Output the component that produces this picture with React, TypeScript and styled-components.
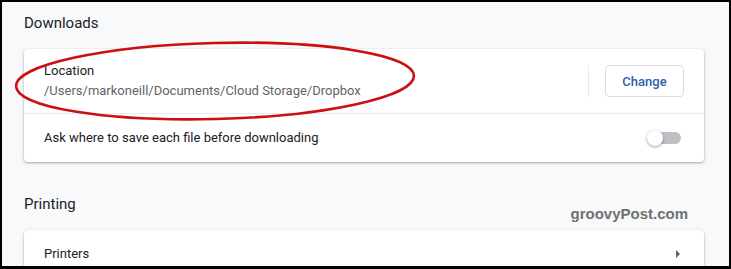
import React from "react";
import styled, { createGlobalStyle } from "styled-components";

const GlobalStyle = createGlobalStyle`
  html, body {
    margin: 0;
    padding: 0;
    background: #000;
  }
  body {
    font-family: Roboto, "Liberation Sans", Arial, sans-serif;
    -webkit-font-smoothing: antialiased;
  }
`;

const Frame = styled.div`
  position: relative;
  box-sizing: border-box;
  width: 731px;
  height: 269px;
  border: 2px solid #000;
  border-bottom-width: 3px;
  background: #f8f9fa;
  overflow: hidden;
  padding: 11px 25px 0 22px;
`;

const SectionHead = styled.div<{ top?: number }>`
  display: flex;
  align-items: flex-end;
  justify-content: space-between;
  margin-top: ${p => p.top ?? 0}px;
  margin-bottom: 16px;
`;

const Heading = styled.h2`
  margin: 0;
  font-size: 15px;
  line-height: 20px;
  font-weight: 400;
  color: #202124;
`;

const Watermark = styled.span`
  font-family: "Liberation Sans", Arial, sans-serif;
  font-size: 15px;
  font-weight: 700;
  color: #707070;
  padding-right: 16px;
  margin-bottom: -8px;
`;

const Card = styled.div`
  background: #fff;
  border-radius: 4px;
  box-shadow: 0 1px 2px rgba(60, 64, 67, 0.3), 0 1px 3px 1px rgba(60, 64, 67, 0.12);
`;

const Row = styled.div<{ height: number; divider?: boolean }>`
  display: flex;
  align-items: center;
  box-sizing: border-box;
  height: ${p => p.height}px;
  padding: 0 20px;
  border-top: ${p => (p.divider ? "1px solid #e8eaed" : "none")};
`;

const RowText = styled.div`
  flex: 1;
  display: flex;
  flex-direction: column;
`;

const Label = styled.span`
  font-size: 13px;
  line-height: 20px;
  color: #202124;
`;

const SubLabel = styled.span`
  font-size: 13px;
  line-height: 20px;
  color: #5f6368;
`;

const Separator = styled.div`
  width: 1px;
  height: 32px;
  background: #e8eaed;
  margin-right: 16px;
`;

const Button = styled.button`
  box-sizing: border-box;
  width: 79px;
  height: 32px;
  border: 1px solid #dadce0;
  border-radius: 4px;
  background: #fff;
  color: #2f5fa8;
  font-family: inherit;
  font-size: 13px;
  font-weight: 500;
  cursor: pointer;
`;

const Toggle = styled.div`
  position: relative;
  width: 34px;
  height: 16px;
  margin-right: 3px;
`;

const Track = styled.div`
  position: absolute;
  left: 6px;
  right: 0;
  top: 2px;
  height: 12px;
  border-radius: 6px;
  background: #bdc1c6;
`;

const Knob = styled.div`
  position: absolute;
  left: 0;
  top: 0;
  width: 16px;
  height: 16px;
  border-radius: 50%;
  background: #fff;
  box-shadow: 0 1px 3px rgba(0, 0, 0, 0.4);
`;

const Annotation = styled.svg`
  position: absolute;
  left: 0;
  top: 0;
  pointer-events: none;
`;

export default function App() {
  return (
    <>
      <GlobalStyle />
      <Frame>
        <SectionHead>
          <Heading>Downloads</Heading>
        </SectionHead>
        <Card>
          <Row height={64}>
            <RowText>
              <Label>Location</Label>
              <SubLabel>/Users/markoneill/Documents/Cloud Storage/Dropbox</SubLabel>
            </RowText>
            <Separator />
            <Button>Change</Button>
          </Row>
          <Row height={49} divider>
            <RowText>
              <Label>Ask where to save each file before downloading</Label>
            </RowText>
            <Toggle>
              <Track />
              <Knob />
            </Toggle>
          </Row>
        </Card>
        <SectionHead top={32}>
          <Heading>Printing</Heading>
          <Watermark>groovyPost.com</Watermark>
        </SectionHead>
        <Card>
          <Row height={48}>
            <RowText>
              <Label>Printers</Label>
            </RowText>
            <svg width="8" height="10" viewBox="0 0 8 10" style={{ marginRight: 2 }}>
              <path d="M2 1 L6 5 L2 9 Z" fill="#5f6368" />
            </svg>
          </Row>
        </Card>
        <Annotation width="731" height="269">
          <ellipse
            cx="213"
            cy="79"
            rx="199"
            ry="38"
            transform="rotate(-1.5 213 79)"
            fill="none"
            stroke="#cc0f0f"
            strokeWidth="2.6"
          />
        </Annotation>
      </Frame>
    </>
  );
}
